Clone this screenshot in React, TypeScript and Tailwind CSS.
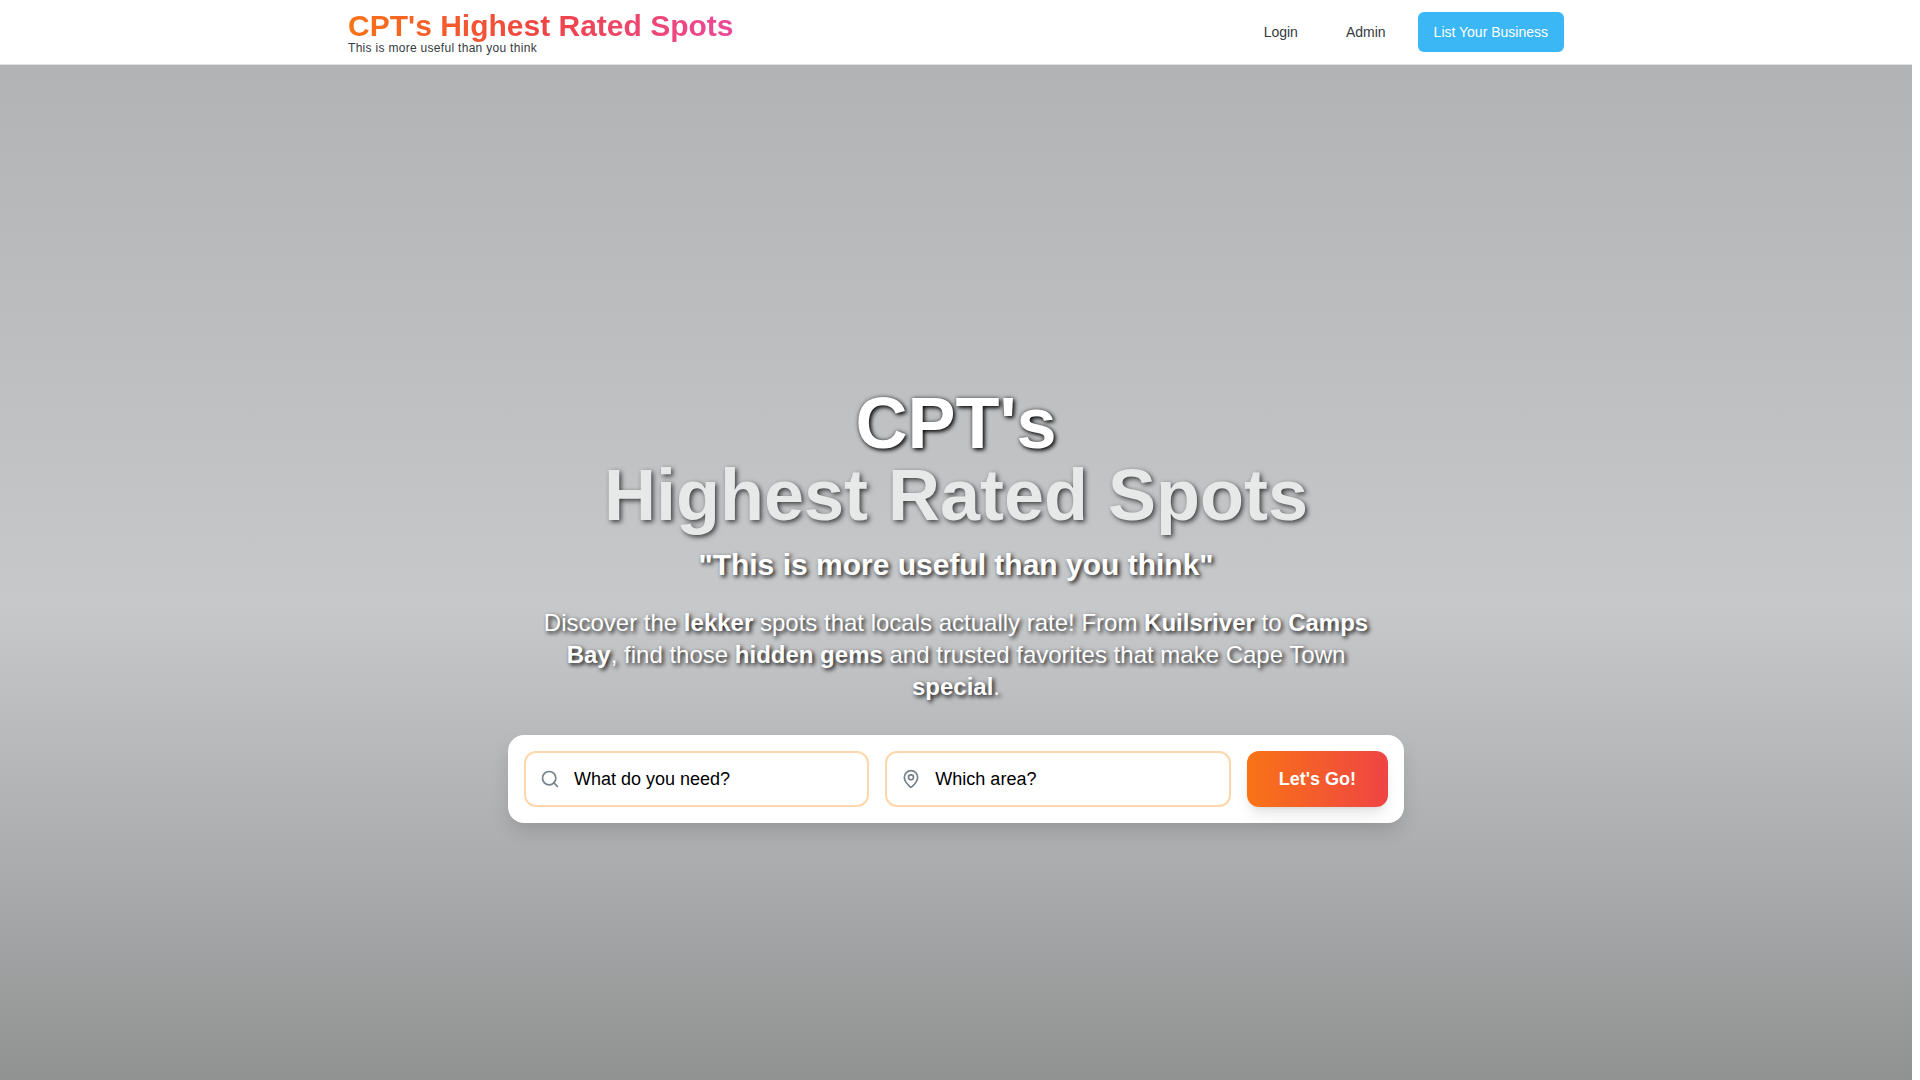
import { MapPin, Search } from 'lucide-react'

const navLinks = [
  { label: 'Login', href: '#login' },
  { label: 'Admin', href: '#admin' },
]

function Header() {
  return (
    <header className="bg-white border-b border-[#e1e3e5]">
      <div className="max-w-7xl mx-auto px-8 h-16 flex items-center justify-between">
        <a href="#home" className="flex flex-col items-start">
          <span className="text-3xl leading-8 font-bold bg-[linear-gradient(to_right,#f97316,#ef4444,#ec4899)] bg-clip-text text-transparent">
            CPT's Highest Rated Spots
          </span>
          <span className="text-xs leading-3 tracking-wide text-[#343a40]">This is more useful than you think</span>
        </a>

        <nav className="flex items-center gap-4">
          {navLinks.map((link) => (
            <a key={link.label} href={link.href} className="px-4 py-2 text-sm text-[#343a40]">
              {link.label}
            </a>
          ))}
          <button type="button" className="h-10 px-4 rounded-md bg-[#3ab7f4] text-sm text-white">
            List Your Business
          </button>
        </nav>
      </div>
    </header>
  )
}

function SearchForm() {
  return (
    <form
      className="bg-white rounded-2xl shadow-[0_10px_20px_-3px_rgba(0,0,0,0.15)] p-4 flex gap-4"
      onSubmit={(e) => e.preventDefault()}
    >
      <label className="relative flex-1">
        <Search className="absolute left-4 top-1/2 -translate-y-1/2 w-5 h-5 text-[#75818c]" />
        <input
          type="text"
          aria-label="What do you need?"
          placeholder="What do you need?"
          className="w-full h-14 pl-12 pr-4 rounded-xl border-2 border-[#fed7aa] text-lg placeholder:text-black"
        />
      </label>
      <label className="relative flex-1">
        <MapPin className="absolute left-4 top-1/2 -translate-y-1/2 w-5 h-5 text-[#75818c]" />
        <input
          type="text"
          aria-label="Which area?"
          placeholder="Which area?"
          className="w-full h-14 pl-12 pr-4 rounded-xl border-2 border-[#fed7aa] text-lg placeholder:text-black"
        />
      </label>
      <button
        type="submit"
        className="h-14 px-8 rounded-xl bg-[linear-gradient(to_right,#f97316,#ef4444)] text-lg font-bold text-white shadow-lg"
      >
        Let's Go!
      </button>
    </form>
  )
}

function Hero() {
  return (
    <section className="min-h-screen flex items-center justify-center bg-[linear-gradient(to_bottom,#b1b3b5_0%,#c7c8ca_50%,#aaabad_75%,#898b89_100%)]">
      <div className="w-full max-w-4xl text-center text-white">
        <h1 className="text-7xl leading-none font-bold mb-4 [text-shadow:2px_2px_4px_rgba(0,0,0,0.9),0_0_4px_rgba(0,0,0,0.5)]">
          CPT's
          <span className="block text-[#e7e8e8] [text-shadow:2px_2px_5px_rgba(0,0,0,0.7)]">Highest Rated Spots</span>
        </h1>
        <p className="text-3xl leading-9 font-bold mb-6 [text-shadow:2px_2px_4px_rgba(0,0,0,0.9)]">
          "This is more useful than you think"
        </p>
        <p className="px-6 text-2xl leading-8 mb-8 [text-shadow:2px_2px_4px_rgba(0,0,0,0.95)]">
          Discover the <strong>lekker</strong> spots that locals actually rate! From <strong>Kuilsriver</strong> to{' '}
          <strong>Camps Bay</strong>, find those <strong>hidden gems</strong> and trusted favorites that make Cape Town{' '}
          <strong>special</strong>.
        </p>
        <SearchForm />
      </div>
    </section>
  )
}

export default function App() {
  return (
    <div className="h-screen overflow-hidden bg-white pr-2 font-['Liberation_Sans',Arial,sans-serif]">
      <Header />
      <Hero />
    </div>
  )
}
